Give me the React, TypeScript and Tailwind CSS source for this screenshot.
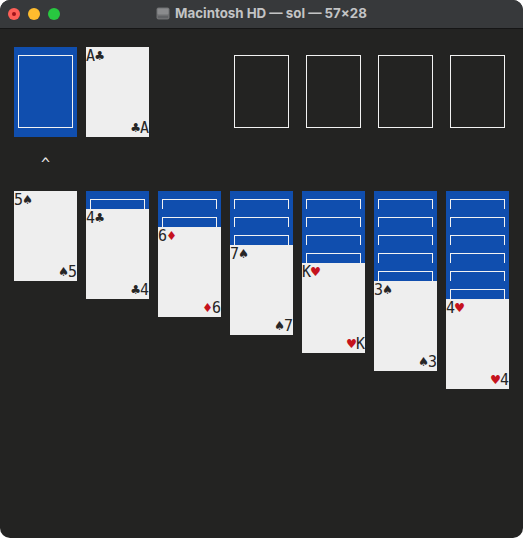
import React from "react";

type Suit = "♠" | "♣" | "♥" | "♦";
type Card = { rank: string; suit: Suit };

const mono = { fontFamily: '"DejaVu Sans Mono", "Liberation Mono", monospace' };

const isRed = (s: Suit) => s === "♥" || s === "♦";

const Cell = ({ ch, red }: { ch: string; red?: boolean }) => (
  <span className={`inline-block w-[9px] text-center ${red ? "text-[#c5121c]" : "text-[#262626]"}`}>{ch}</span>
);

const FaceUp = ({ card }: { card: Card }) => (
  <div className="w-[63px] h-[90px] bg-[#eeeeee] flex flex-col justify-between text-[15px] leading-[18px]">
    <div className="flex h-[18px]">
      <Cell ch={card.rank} />
      <Cell ch={card.suit} red={isRed(card.suit)} />
    </div>
    <div className="flex h-[18px] justify-end">
      <Cell ch={card.suit} red={isRed(card.suit)} />
      <Cell ch={card.rank} />
    </div>
  </div>
);

const StockBack = () => (
  <div className="w-[63px] h-[90px] bg-[#104eae] pt-[8px] px-[4px]">
    <div className="h-[73px] border border-[#f2f2f2]" />
  </div>
);

const EmptySlot = () => (
  <div className="w-[63px] h-[90px] pt-[8px] px-[4px]">
    <div className="h-[73px] border border-[#f2f2f2]" />
  </div>
);

const BackRow = () => (
  <div className="w-[63px] h-[18px] bg-[#104eae] pt-[8px] px-[4px]">
    <div className="h-[10px] border-t border-l border-r border-[#f2f2f2]" />
  </div>
);

const tableau: { down: number; up: Card }[] = [
  { down: 0, up: { rank: "5", suit: "♠" } },
  { down: 1, up: { rank: "4", suit: "♣" } },
  { down: 2, up: { rank: "6", suit: "♦" } },
  { down: 3, up: { rank: "7", suit: "♠" } },
  { down: 4, up: { rank: "K", suit: "♥" } },
  { down: 5, up: { rank: "3", suit: "♠" } },
  { down: 6, up: { rank: "4", suit: "♥" } },
];

const DriveIcon = () => (
  <svg width="14" height="13" viewBox="0 0 14 13">
    <rect x="0.5" y="0.5" width="13" height="12" rx="2" fill="#6f7072" />
    <rect x="1.5" y="1.5" width="11" height="6" rx="1" fill="#8a8b8d" />
    <rect x="2" y="9.5" width="10" height="1" fill="#55575a" />
  </svg>
);

export default function App() {
  return (
    <div className="w-[523px] h-[538px] bg-white">
      <div className="w-[523px] h-[538px] rounded-[10px] overflow-hidden bg-[#232322] flex flex-col">
        <div className="h-[29px] shrink-0 bg-[#37393b] border-b border-[#161616] relative flex items-center justify-center">
          <div className="absolute left-[8px] top-[8px] flex gap-[8px]">
            <div className="w-[12px] h-[12px] rounded-full bg-[#fe5f57] flex items-center justify-center">
              <div className="w-[4px] h-[4px] rounded-full bg-[#a0141a]" />
            </div>
            <div className="w-[12px] h-[12px] rounded-full bg-[#febc2e]" />
            <div className="w-[12px] h-[12px] rounded-full bg-[#28c840]" />
          </div>
          <div className="flex items-center gap-[5px] pb-[1px]">
            <DriveIcon />
            <span className="text-[13.3px] font-bold text-[#c3c4c5]" style={{ fontFamily: '"Inter", "Liberation Sans", sans-serif' }}>
              Macintosh HD — sol — 57×28
            </span>
          </div>
        </div>

        <div className="pl-[14px] pt-[18px]" style={mono}>
          <div className="flex gap-[9px]">
            <StockBack />
            <FaceUp card={{ rank: "A", suit: "♣" }} />
            <div className="w-[63px]" />
            <EmptySlot />
            <EmptySlot />
            <EmptySlot />
            <EmptySlot />
          </div>

          <div className="h-[54px] pt-[18px]">
            <div className="h-[18px] leading-[18px] text-[15px] text-[#e8e8e8] pl-[27px]">^</div>
          </div>

          <div className="flex gap-[9px] items-start">
            {tableau.map((col, i) => (
              <div key={i} className="flex flex-col">
                {Array.from({ length: col.down }).map((_, j) => (
                  <BackRow key={j} />
                ))}
                <FaceUp card={col.up} />
              </div>
            ))}
          </div>
        </div>
      </div>
    </div>
  );
}
